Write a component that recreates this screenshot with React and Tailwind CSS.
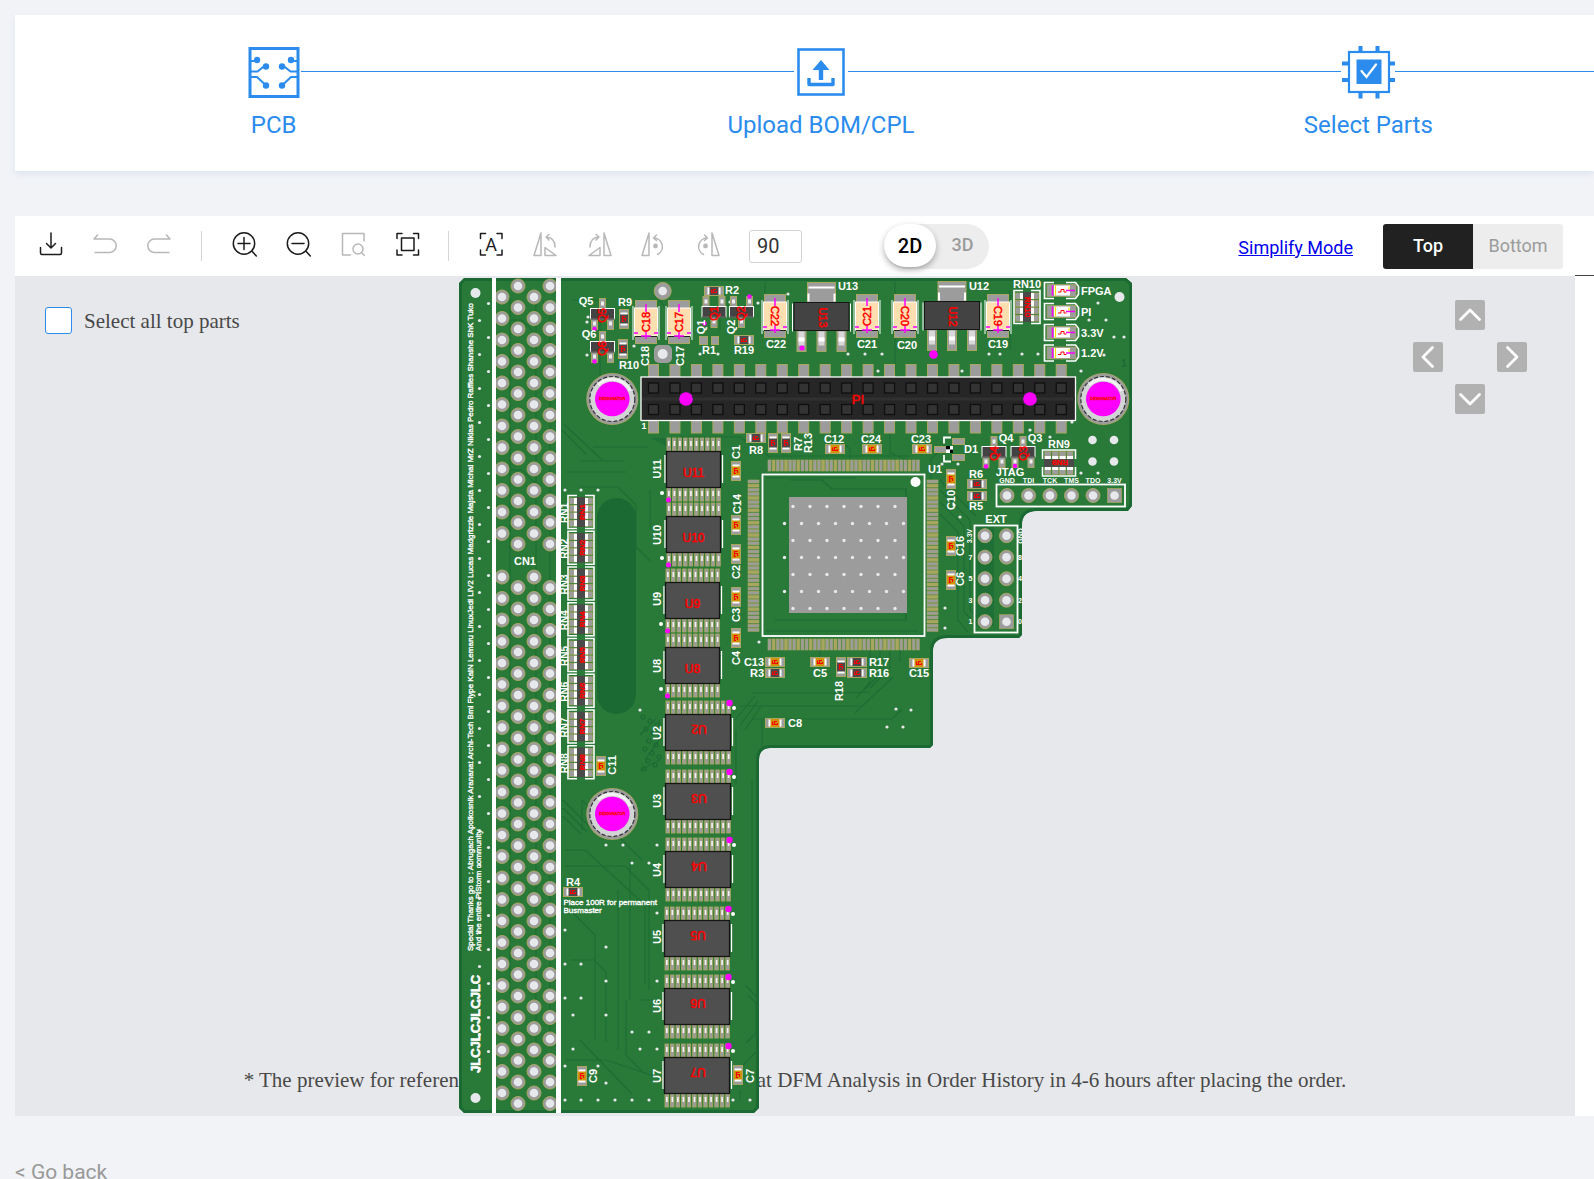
import React from "react";

const BLUE = "#2b8cee";
const GREEN = "#297a39";
const DARK = "#1b6a33";
const PAD = "#9c9c9c";
const GOLD = "#a9a660";
const HOLE = "#e7e8ec";
const PINK = "#ff00ff";

const range = (n) => Array.from({ length: n }, (_, i) => i);

/* ---------- step icons ---------- */

function PcbStepIcon() {
  const half = (
    <g>
      <path d="M2 16H9M2 26.500h8.500L18 20.500M2 32h8l8 7.500" fill="none" stroke={BLUE} strokeWidth="2" />
      <circle cx="10" cy="15" r="3.200" fill={BLUE} />
      <circle cx="19" cy="21.500" r="3.200" fill={BLUE} />
      <circle cx="19" cy="40.500" r="3.200" fill={BLUE} />
    </g>
  );
  return (
    <svg viewBox="0 0 54 54" className="size-[54px]" aria-hidden="true">
      <rect x="3" y="3.500" width="48" height="48" fill="none" stroke={BLUE} strokeWidth="3" />
      {half}
      <g transform="translate(54 0) scale(-1 1)">{half}</g>
    </svg>
  );
}

function UploadStepIcon() {
  return (
    <svg viewBox="0 0 54 54" className="size-[54px]" aria-hidden="true">
      <rect x="4.500" y="4.500" width="45" height="45" fill="none" stroke={BLUE} strokeWidth="2.600" />
      <path d="M27 15l8.500 10H29.200v10H24.800V25H18.500z" fill={BLUE} />
      <path d="M15 33v6.500h24V33" fill="none" stroke={BLUE} strokeWidth="3.400" strokeLinejoin="round" />
    </svg>
  );
}

function PartsStepIcon() {
  return (
    <svg viewBox="0 0 54 54" className="size-[54px]" aria-hidden="true">
      <path
        d="M19.500 1v6M36.500 1v6M19.500 47v6.500M36.500 47v6.500M1 18.500h7M1 35h7M48 18.500h7M48 35h7"
        stroke={BLUE}
        strokeWidth="4"
      />
      <rect x="8" y="7" width="40" height="40" fill="#fff" stroke={BLUE} strokeWidth="2.200" />
      <rect x="15.500" y="14.500" width="25" height="24.500" fill={BLUE} />
      <path d="M20.500 26l5 6 9.500-12.500" fill="none" stroke="#fff" strokeWidth="2.200" strokeLinecap="round" />
    </svg>
  );
}

function Step({ icon, label, first }) {
  return (
    <li className="flex flex-col items-center">
      <div className="flex w-full items-center">
        <span className={first ? "mb-0.5 h-px flex-1" : "mb-0.5 h-px flex-1 bg-[#2b8cee]"} />
        {icon}
        <span className="mb-0.5 h-px flex-1 bg-[#2b8cee]" />
      </div>
      <span className="mt-[10px] text-2xl leading-8 text-[#2b8cee]">{label}</span>
    </li>
  );
}

/* ---------- toolbar ---------- */

function ToolButton({ label, off, children }) {
  return (
    <button type="button" aria-label={label} className={off ? "pb-1 text-[#b8b8b8]" : "pb-1 text-[#1c1c1c]"}>
      <svg
        viewBox="0 0 24 24"
        className="size-6 overflow-visible"
        fill="none"
        stroke="currentColor"
        strokeWidth="1.500"
        strokeLinecap="round"
        strokeLinejoin="round"
      >
        {children}
      </svg>
    </button>
  );
}

const Separator = () => <span className="h-[30px] w-px bg-[#d6d6d6]" />;

const CORNERS = "M1.500 6.500v-5h5M18 1.500h5v5M23 18v5h-5M6.500 23h-5v-5";

const FlipLeft = () => (
  <>
    <path d="M1 23.500L8 1v22.500zM12 15.500l11 8H12z" />
    <path d="M13.500 5c5.500.5 8.500 4.500 8.500 10M16 2.500L13 5l3 3" />
  </>
);
const TurnLeft = () => (
  <>
    <path d="M1 23.500L8 1v22.500z" />
    <path d="M13 6a8.700 8.700 0 0 1 3.500 16.500M15.500 3L12.500 6l3 2.500" />
    <circle cx="14.500" cy="14" r="1.700" fill="currentColor" />
  </>
);

function Toolbar() {
  return (
    <div className="flex h-[60px] items-center bg-white pr-3 pl-6">
      <div className="flex items-center gap-[30px]">
        <ToolButton label="Download">
          <path d="M12 1v15M7.500 11.500L12 16l4.500-4.500M1.500 15.500V21q0 1.500 1.500 1.500h18q1.500 0 1.500-1.500v-5.500" />
        </ToolButton>
        <ToolButton label="Undo" off>
          <path d="M4.500 3L1 7h15.500a6.700 6.700 0 0 1 0 13.500H2" />
        </ToolButton>
        <ToolButton label="Redo" off>
          <path d="M19.500 3l3.500 4H7.500a6.700 6.700 0 0 0 0 13.500H22" />
        </ToolButton>
        <Separator />
        <ToolButton label="Zoom in">
          <circle cx="12" cy="11.500" r="10.700" />
          <path d="M19.800 19l4.500 5M12 5.500v12M6 11.500h12" />
        </ToolButton>
        <ToolButton label="Zoom out">
          <circle cx="12" cy="11.500" r="10.700" />
          <path d="M19.800 19l4.500 5M6 11.500h12" />
        </ToolButton>
        <ToolButton label="Zoom to area" off>
          <path d="M24 9V1.500H2.500V23h8" />
          <circle cx="18" cy="17" r="5" />
          <path d="M21.500 20.500l2.800 3" />
        </ToolButton>
        <ToolButton label="Fit to window">
          <g transform="translate(1.500 0)">
            <path d={CORNERS} />
            <rect x="6" y="6" width="12.500" height="12.500" />
          </g>
        </ToolButton>
        <Separator />
        <ToolButton label="Show designators">
          <path d={CORNERS} />
          <text x="12" y="19" textAnchor="middle" fontSize="18" fill="currentColor" stroke="none" fontFamily="Roboto">
            A
          </text>
        </ToolButton>
        <ToolButton label="Rotate left" off>
          <FlipLeft />
        </ToolButton>
        <ToolButton label="Rotate right" off>
          <g transform="translate(25 0) scale(-1 1)">
            <FlipLeft />
          </g>
        </ToolButton>
        <ToolButton label="Turn left about centre" off>
          <TurnLeft />
        </ToolButton>
        <ToolButton label="Turn right about centre" off>
          <g transform="translate(25 0) scale(-1 1)">
            <TurnLeft />
          </g>
        </ToolButton>
        <input
          type="text"
          aria-label="Rotation angle"
          defaultValue="90"
          className="h-[33px] w-[53px] rounded-[3px] border border-[#d2d2d2] bg-white px-[7px] text-xl text-[#333] outline-none"
        />
      </div>

      <div className="ml-[82px] flex h-[45px] rounded-full bg-[#ededed]">
        <button
          type="button"
          aria-pressed="true"
          className="h-[43px] w-[52px] rounded-full bg-white pt-0.5 text-xl font-medium text-black shadow-[0_3px_6px_rgba(0,0,0,0.3)]"
        >
          2D
        </button>
        <button type="button" aria-pressed="false" className="w-[53px] pb-0.5 text-lg font-medium text-[#9b9b9b]">
          3D
        </button>
      </div>

      <a href="#simplify" className="mt-[3px] ml-auto text-lg text-[#0000ee] underline">
        Simplify Mode
      </a>
      <div className="ml-[30px] flex h-[45px] overflow-hidden rounded-[3px] text-lg">
        <button type="button" aria-pressed="true" className="w-[90px] bg-[#212121] font-medium text-white">
          Top
        </button>
        <button type="button" aria-pressed="false" className="w-[90px] bg-[#ededed] text-[#9b9b9b]">
          Bottom
        </button>
      </div>
    </div>
  );
}

/* ---------- circuit board ---------- */

const BOARD =
  "M464 278H1126L1132 283V506L1128 511H1037Q1022 511 1022 525V635L1019 638H948Q933 638 933 651V745L930 748H771Q759 748 759 760V1108L754 1113H464L459 1108V283Z";

/* silkscreen text, centred; rot turns it about its own centre */
function Label({ x, y, t, s = 11, c = "#fff", rot = 0, w = 700, line = 0 }) {
  return (
    <text
      x={x}
      y={y + s * 0.36}
      textAnchor="middle"
      fontSize={s}
      fontWeight={w}
      fill={c}
      stroke={c}
      strokeWidth={line}
      transform={rot ? `rotate(${rot} ${x} ${y})` : undefined}
    >
      {t}
    </text>
  );
}

const Red = (p) => <Label c="#ff0000" w={400} s={12} line={0.5} {...p} />;

function Passive({ x, y, t, v }) {
  const cap = t[0] === "C";
  return (
    <g transform={`translate(${x} ${y}) rotate(${v ? 90 : 0})`}>
      <rect x="-9.500" y="-4.500" width="19" height="9" fill={PAD} stroke={GOLD} />
      <rect x="-6.500" y="-3.500" width="13" height="7" fill="#fff" />
      <rect x="-4.500" y="-4" width="9" height="8" fill={cap ? "#cf930a" : "#4a4a4a"} />
      <path d="M-2.500 -1.500v3h2v-3h2.500M0 1.500h2.500v-1.500" fill="none" stroke="#ff0000" strokeWidth="1.200" />
    </g>
  );
}

/* [ref, x, y, vertical, label x, label y, label rotation] */
const PASSIVES = [
  ["C1", 736, 471, 1, 736, 452, -90],
  ["C14", 736, 525, 1, 737, 504, -90],
  ["C2", 736, 554, 1, 736, 572, -90],
  ["C3", 736, 597, 1, 736, 615, -90],
  ["C4", 736, 638, 1, 736, 658, -90],
  ["C13", 775, 662, 0, 754, 662, 0],
  ["R3", 775, 673, 0, 757, 673, 0],
  ["C5", 820, 662, 0, 820, 673, 0],
  ["R18", 841, 667, 1, 839, 691, -90],
  ["R17", 857, 662, 0, 879, 662, 0],
  ["R16", 857, 673, 0, 879, 673, 0],
  ["C15", 919, 663, 0, 919, 673, 0],
  ["C8", 775, 723, 0, 795, 723, 0],
  ["C10", 951, 479, 1, 951, 500, -90],
  ["C16", 951, 546, 1, 960, 546, -90],
  ["C6", 951, 580, 1, 960, 579, -90],
  ["R6", 977, 484, 0, 976, 474, 0],
  ["R5", 977, 496, 0, 976, 506, 0],
  ["C23", 922, 449, 0, 921, 439, 0],
  ["C12", 835, 449, 0, 834, 439, 0],
  ["C24", 872, 449, 0, 871, 439, 0],
  ["R8", 756, 438, 0, 756, 450, 0],
  ["R7", 773, 443, 1, 798, 444, -90],
  ["R13", 786, 443, 1, 808, 443, -90],
  ["R2", 714, 291, 0, 732, 290, 0],
  ["R19", 744, 340, 0, 744, 350, 0],
  ["R9", 624, 319, 1, 625, 302, 0],
  ["R10", 623, 349, 1, 629, 365, 0],
  ["C9", 582, 1076, 1, 593, 1076, -90],
  ["C7", 738, 1075, 1, 750, 1076, -90],
  ["C11", 601, 766, 1, 612, 765, -90],
  ["R4", 573, 892, 0, 573, 882, 0],
];

function Tantalum({ x, y, t, rot }) {
  return (
    <g>
      <path d={`M${x - 13} ${y - 16}v34M${x + 13} ${y - 16}v34`} stroke="#fff" />
      <rect x={x - 10.500} y={y - 21.500} width="21" height="43" fill={PAD} stroke={GOLD} />
      <rect x={x - 11.500} y={y - 14} width="23" height="28" fill="#ffdfb0" stroke="#fff" />
      <path d={`M${x - 11} ${y + 14.500}h22`} stroke="#222" />
      <path
        d={`M${x} ${y - 18}v8M${x} ${y + 9}v8M${x - 5} ${y + 14}h10M${x - 12} ${y + 11}h4M${x + 8} ${y + 11}h4`}
        stroke={PINK}
        strokeWidth="1.500"
      />
      <Red x={x} y={y} t={t} rot={rot} s={11} />
    </g>
  );
}

const TANTALUMS = [
  ["C18", 646, 322, -90],
  ["C17", 679, 322, -90],
  ["C22", 775, 316, 90],
  ["C21", 867, 316, -90],
  ["C20", 905, 316, 90],
  ["C19", 998, 316, 90],
];

function Regulator({ x, t, y }) {
  return (
    <g>
      <rect x={x - 14} y={y - 20} width="28" height="22" fill={PAD} stroke={GOLD} />
      <path d={`M${x - 13} ${y - 15}h26M${x - 13} ${y - 9}v8M${x + 13} ${y - 9}v8`} stroke="#fff" strokeWidth="2" />
      {[-20, 0, 20].map((d) => (
        <g key={d}>
          <rect x={x + d - 4.500} y={y + 28} width="9" height="21" fill={PAD} stroke={GOLD} />
          <rect x={x + d - 3} y={y + 29} width="6" height="14" fill="#d8d8d8" />
          <rect x={x + d - 3} y={y + 35} width="6" height="4" fill="#fff" />
        </g>
      ))}
      <path d={`M${x - 29} ${y + 1}v28M${x + 29} ${y + 1}v28`} stroke="#fff" />
      <rect x={x - 27.500} y={y} width="55" height="28" fill="#434343" stroke="#161616" />
      <Red x={x + 1} y={y + 15} t={t} rot={90} s={11} />
    </g>
  );
}

/* flip: two pads on top instead of below */
function Transistor({ x, y, t, flip }) {
  const pad = (px, py) => (
    <g key={`${px},${py}`}>
      <rect x={px - 3} y={py} width="6" height="11" fill={PAD} stroke={GOLD} />
      <rect x={px - 1.500} y={py + 3} width="3" height="4" fill="#eee" />
    </g>
  );
  return (
    <g>
      {pad(x, flip ? y + 10 : y - 10)}
      {pad(x - 8, flip ? y - 10 : y + 10)}
      {pad(x + 8, flip ? y - 10 : y + 10)}
      <rect x={x - 12} y={y} width="24" height="10.500" fill="#434343" stroke="#fff" />
      <path d={`M${x - 12} ${y + 10.500}h24`} stroke="#111" />
      <Red x={x} y={y + 7} t={t} rot={-90} s={11} />
    </g>
  );
}

function Resistors({ x, y, t, rot, tr }) {
  return (
    <g>
      <g transform={`translate(${x} ${y}) rotate(${rot})`}>
        <path d="M-4 -16.500h-9v33h9M4 -16.500h9v33h-9" fill="none" stroke="#fff" strokeWidth="1.600" />
        {range(4).map((i) => (
          <g key={i}>
            <rect x="-11.500" y={-14 + i * 7.400} width="23" height="6" fill={PAD} stroke={GOLD} strokeWidth=".7" />
            <rect x="-7" y={-14 + i * 7.400} width="14" height="6" fill="#fff" />
          </g>
        ))}
        <rect x="-4" y="-15" width="8" height="30" fill="#4a4a4a" />
      </g>
      <Red x={x + 1} y={y} t={t} rot={tr} s={8} />
    </g>
  );
}

function Led({ y, t }) {
  return (
    <g>
      <path d={`M1054 ${y - 8}h-9.500v16h9.500M1066 ${y - 8}h9.500l3 4v8l-3 4h-9.500`} fill="none" stroke="#fff" strokeWidth="1.700" />
      <rect x="1047" y={y - 6} width="29" height="12" fill={PAD} stroke={GOLD} strokeWidth=".7" />
      <rect x="1054" y={y - 5} width="16" height="10" fill="#fff" />
      <path d={`M1055.500 ${y - 5}v10M1069 ${y - 4}v4`} stroke="#f5e800" strokeWidth="1.200" />
      <path d={`M1052.500 ${y - 5}v10M1066 ${y}h9`} stroke={PINK} strokeWidth="1.500" />
      <path d={`M1058 ${y + 1.500}h3v-2.500h3v2.500h2.500`} fill="none" stroke="#f00" />
      <text x="1081" y={y + 4} fontSize="11" fontWeight="700" fill="#fff">
        {t}
      </text>
    </g>
  );
}

function Soic({ x, y, w, h, n, t, rot, ly }) {
  const cx = x + w / 2;
  return (
    <g>
      {range(n).map((i) =>
        [y - 13, y + h].map((py) => (
          <g key={`${i},${py}`}>
            <rect x={x + 1 + i * 5.530} y={py} width="3.500" height="13" fill={PAD} stroke={GOLD} strokeWidth=".9" />
            <rect x={x + 2 + i * 5.530} y={py + 3} width="1.700" height="5" fill="#f2f2f2" />
          </g>
        ))
      )}
      <path d={`M${x - 1} ${y + 4}v28M${x + w + 1.500} ${y + 4}v28`} stroke="#fff" strokeWidth="1.300" />
      <rect x={x + 0.5} y={y + 0.5} width={w - 1} height={h - 1} fill="#4f4f4f" stroke="#151515" strokeWidth="1.300" />
      <Red x={rot ? cx + 1 : cx} y={rot ? y + 15 : y + 22} t={t} rot={rot} />
      {rot ? (
        <>
          <circle cx={x + w - 1.500} cy={y - 11} r="3.200" fill={PINK} />
          <circle cx={x + w + 3} cy={y - 6} r="2" fill="#fff" />
        </>
      ) : (
        <>
          <circle cx={x + 2.500} cy={y + h + 12} r="2.500" fill={PINK} />
          <circle cx={x - 4} cy={y + h + 5} r="2" fill="#fff" />
        </>
      )}
      <Label x={657} y={ly} t={t} rot={-90} />
    </g>
  );
}

const CHIPS = [
  ["U11", 666, 451, 55, 10, 0, 469],
  ["U10", 666, 516, 55, 10, 0, 535],
  ["U9", 665, 582, 55, 10, 0, 599],
  ["U8", 665, 647, 55, 10, 0, 666],
  ["U2", 665, 714, 66, 12, 180, 733],
  ["U3", 665, 783, 66, 12, 180, 801],
  ["U4", 665, 851, 66, 12, 180, 870],
  ["U5", 664, 920, 66, 12, 180, 937],
  ["U6", 664, 988, 66, 12, 180, 1006],
  ["U7", 664, 1057, 66, 12, 180, 1076],
];

function Via({ x, y, r = 7, square }) {
  return (
    <g>
      {square ? (
        <rect x={x - 7} y={y - 7} width="14" height="14" fill={PAD} stroke={GOLD} strokeWidth=".7" />
      ) : (
        <circle cx={x} cy={y} r={r} fill={PAD} stroke={GOLD} />
      )}
      <circle cx={x} cy={y} r="4.300" fill={HOLE} />
    </g>
  );
}

function MountHole({ x, y }) {
  return (
    <g>
      <circle cx={x} cy={y} r="26" fill={GOLD} />
      <circle cx={x} cy={y} r="25.200" fill={PAD} />
      <circle cx={x} cy={y} r="22.500" fill="#d3d4d6" stroke="#333" strokeWidth="1.200" strokeDasharray="4 2" />
      <path d={`M${x - 14} ${y - 14}A20 20 0 0 1 ${x + 18} ${y - 8}`} fill="none" stroke="#f2f2f2" strokeWidth="3" />
      <circle cx={x} cy={y} r="17.300" fill={PINK} />
      <Red x={x} y={y} t="DESIGNATOR" s={4} line={0.3} />
    </g>
  );
}

function EdgeConnector() {
  const columns = [
    [502, 297, 577, 12, 25],
    [518, 286, 587.500, 13, 25],
    [534, 297, 577, 12, 25],
    [550, 286, 587.500, 13, 25],
  ];
  return (
    <g>
      {columns.map(([x, top, low, a, b]) => (
        <g key={x}>
          {range(a).map((i) => (
            <Via key={i} x={x} y={top + i * 21.500} />
          ))}
          {range(b).map((i) => (
            <Via key={`b${i}`} x={x} y={low + i * 21.500} />
          ))}
        </g>
      ))}
      <Label x={525} y={561} t="CN1" />
    </g>
  );
}

function PinHeader() {
  return (
    <g>
      {range(20).map((i) => (
        <g key={i} fill={PAD} stroke={GOLD}>
          <rect x={648.500 + i * 21.460} y="364.500" width="10" height="13" />
          <rect x={648.500 + i * 21.460} y="420" width="10" height="13" />
        </g>
      ))}
      <rect x="641" y="377" width="434.500" height="43.500" fill="#262626" stroke="#fff" strokeWidth="1.300" />
      <path d="M642 399H1075" stroke="#303030" strokeWidth="3" />
      {range(20).map((i) =>
        [388, 409.500].map((y) => (
          <rect
            key={`${i},${y}`}
            x={648.500 + i * 21.460}
            y={y - 5}
            width="10"
            height="10"
            fill="#333"
            stroke="#0f0f0f"
            strokeWidth="1.300"
          />
        ))
      )}
      <circle cx="686" cy="399" r="6.800" fill={PINK} />
      <circle cx="1030" cy="399" r="6.800" fill={PINK} />
      <Red x={858} y={399} t="PI" s={13} />
      <Label x={644} y={426} t="1" s={9} />
      <Label x={1124} y={363} t="1" s={10} c={DARK} />
    </g>
  );
}

function MainChip() {
  return (
    <g>
      {range(37).map((i) => {
        const c = i % 3 === 1 ? GOLD : PAD;
        const d = i * 4.120;
        return (
          <g key={i} fill={c} stroke={GOLD} strokeWidth=".6">
            <rect x={768 + d} y="460" width="3" height="11" />
            <rect x={768 + d} y="639" width="3" height="11" />
            <rect x="748" y={480 + d} width="11" height="3" />
            <rect x="927" y={480 + d} width="11" height="3" />
          </g>
        );
      })}
      <rect x="762.500" y="474.500" width="162" height="161.500" fill={GREEN} stroke="#fff" strokeWidth="1.800" />
      <path d="M766 478h90M766 631h152M775 620h131V489H832l-10-9H790" fill="none" stroke={DARK} strokeWidth="1.200" />
      <rect x="789" y="497" width="118" height="116" fill={PAD} />
      {range(7).map((r) =>
        range(r % 2 ? 8 : 7).map((k) => (
          <circle key={`${r},${k}`} cx={(r % 2 ? 784.500 : 793) + k * 17} cy={506.500 + r * 17} r="1.700" fill={HOLE} />
        ))
      )}
      <circle cx="915.500" cy="482" r="5" fill="#fff" />
      <Label x={935} y={469} t="U1" />
    </g>
  );
}

function Connectors() {
  return (
    <g>
      <Label x={1010} y={472} t="JTAG" />
      {["GND", "TDI", "TCK", "TMS", "TDO", "3.3V"].map((t, i) => (
        <g key={t}>
          <Label x={1007 + i * 21.500} y={480} t={t} s={7} />
          <Via x={1007 + i * 21.500} y={495.500} square={i === 5} />
        </g>
      ))}
      <rect x="996.500" y="484.500" width="128.500" height="22" fill="none" stroke="#fff" strokeWidth="1.800" />
      <Label x={996} y={519} t="EXT" />
      {range(5).map((i) => (
        <g key={i}>
          <Via x={985} y={535.700 + i * 21.500} />
          <Via x={1006.500} y={535.700 + i * 21.500} square={i === 4} />
          {i > 0 && <Label x={970.500} y={535.700 + i * 21.500} t={["", "7", "5", "3", "1"][i]} s={7} />}
          {i > 0 && <Label x={1020} y={535.700 + i * 21.500} t={["", "8", "4", "2", "0"][i]} s={7} />}
        </g>
      ))}
      <Label x={969} y={536} t="3.3V" s={7} rot={-90} />
      <Label x={1020} y={536} t="GND" s={7} rot={-90} />
      <rect x="974.500" y="525.500" width="43" height="107" fill="none" stroke="#fff" strokeWidth="1.800" />
    </g>
  );
}

const TRACES = [
  "M562 430l24 24M564 424l38 36M580 461h45M593 447h55M566 472h60M580 487h38l18 18v42l14 14M650 490v40",
  "M572 300h28v110M720 300v30M765 282v24h-20M895 282v90M1010 290v60M660 300l20 30M600 380h30",
  "M770 456h140M700 445l-20-8h60l30 20M830 433l20 16v10M890 433v20l20 8M945 445l-14 14v20",
  "M940 490l30 30v90l16 16M940 502l24 24v86l16 16M940 514l18 18v88l10 12M940 480l36 36",
  "M740 706h120M752 693h90l28-1M752 719h140l10-10M855 713l38-36M735 720l20-24M740 725l18-24M745 730l16-24M762 720v26",
  "M820 650v20M870 650v32l-14 16M880 650v24l-16 16M890 650v18l-20 20M900 650v12",
  "M565 850h20l60 55v80M565 866h60l24 24v100M565 905l30 30v104M570 960h24l12 12v70M618 890v160",
  "M582 830v-30l60 60M630 860v140M640 1000h20M626 1000v55l16 16M580 1040l52 54M566 1060h40l60 20",
  "M745 985l14 14v50l-16 16M748 995l8 8v30l-10 10M736 730v55M752 780v180M740 1090v10",
  "M640 735l16-16M645 760l14-20v-20M640 770l20-10M563 800l30 30M563 808l24 24M563 816l18 18M563 560h20",
];

const VIAS = [
  [565, 490], [581, 490], [598, 490], [640, 710], [606, 845], [623, 845], [657, 845], [632, 863], [649, 863],
  [657, 913], [565, 930], [606, 947], [565, 964], [581, 964], [606, 981], [657, 981], [565, 998], [581, 998],
  [573, 1015], [606, 1015], [632, 1032], [649, 1032], [573, 1049], [640, 1049], [657, 1049], [565, 1066],
  [598, 1066], [606, 1083], [565, 1100], [581, 1100], [598, 1100], [615, 1100], [632, 1100], [649, 1100],
  [733, 1100], [750, 1100], [1098, 303], [1089, 320], [1106, 320], [1114, 337], [1124, 337], [1104, 355],
  [1081, 371], [1000, 354], [1022, 354], [1038, 354], [989, 354], [848, 354], [865, 354], [882, 354],
  [700, 354], [718, 354], [878, 371], [962, 371], [1072, 422], [945, 628], [911, 710], [887, 727], [903, 727],
  [896, 709], [759, 642], [954, 505], [960, 517], [945, 608], [788, 294], [730, 302], [587, 322], [587, 355],
  [634, 346], [588, 317], [758, 303], [1050, 437], [1030, 430], [958, 464], [942, 464], [1081, 473], [1098, 473],
];

function Board() {
  return (
    <svg
      viewBox="458 278 674 835"
      className="relative mt-0.5 h-[835px] w-[674px] flex-none"
      fontFamily="'Liberation Sans', Arial, sans-serif"
      role="img"
      aria-label="Circuit board, top side"
    >
      <defs>
        <clipPath id="board-edge">
          <path d={BOARD} />
        </clipPath>
      </defs>
      <g clipPath="url(#board-edge)">
        <path d={BOARD} fill={GREEN} stroke={DARK} strokeWidth="6" />
        {TRACES.map((d) => (
          <path key={d} d={d} fill="none" stroke="#1d6c34" strokeWidth="1.100" />
        ))}
        <path
          d="M500 292l10 6v700M526 292l10 8v760M542 300l8 8v740M498 320h24l20 20M498 470h24l20 20M500 820h20l20 20"
          fill="none"
          stroke={DARK}
        />
        <path d="M650 438h60v14l-40-4zM976 526h18v100h-18zM790 480h118v12H790z" fill="#1f7036" />
        <rect x="597" y="498" width="39" height="216" rx="19.500" fill={DARK} />
        {VIAS.map(([x, y]) => (
          <circle key={`${x},${y}`} cx={x} cy={y} r="1.600" fill={HOLE} />
        ))}

        {/* breakaway strip */}
        <circle cx="475.500" cy="293" r="5" fill={HOLE} />
        <circle cx="475.500" cy="1098" r="5" fill={HOLE} />
        {range(46).map((i) => (
          <circle key={i} cx={i % 2 ? 479.500 : 488.500} cy={303.500 + i * 17} r="1.600" fill={HOLE} />
        ))}
        <g fill="#fff" stroke="#fff" strokeWidth=".35" fontSize="8">
          <text transform="translate(473 951) rotate(-90)">
            Special Thanks go to : Abrugach Apolkosnik Arananat Archi-Tech Bmi Flype KaiN Lemaru LinuxJedi LIV2 Lucas
            Madgrizzle Majsta Michal MrZ Niklas Pedro Raffles Shanshe ShK Tuko
          </text>
          <text transform="translate(481 951) rotate(-90)">And the entire PiStorm community</text>
          <text x="563.500" y="905">
            Place 100R for permanent
          </text>
          <text x="563.500" y="913">
            Busmaster
          </text>
          <text transform="translate(480 1073) rotate(-90)" fontSize="13" fontWeight="700" strokeWidth=".6">
            JLCJLCJLCJLC
          </text>
        </g>
        <EdgeConnector />

        {range(8).map((i) => (
          <Label key={i} x={564} y={513 + i * 35.750} t={`RN${i + 1}`} rot={-90} s={10} />
        ))}
        <rect x="492" y="278" width="4" height="835" fill="#fff" />
        <rect x="556" y="278" width="5" height="835" fill="#fff" />
        {range(8).map((i) => (
          <Resistors key={i} x={581} y={512 + i * 35.750} t={`RN${i + 1}`} rot={0} tr={-90} />
        ))}
        <Resistors x={1027} y={307} t="RN10" rot={0} tr={90} />
        <Resistors x={1059} y={463} t="RN9" rot={90} tr={180} />
        <Label x={1027} y={284} t="RN10" />
        <Label x={1059} y={444} t="RN9" />

        <Via x={662.700} y={291} r={8.500} />
        <rect x="654" y="345" width="18" height="18" rx="5" fill={PAD} />
        <circle cx="662.700" cy="354" r="5" fill={HOLE} />
        <PinHeader />
        <MountHole x={612.300} y={399} />
        <MountHole x={1103.300} y={399} />
        <MountHole x={612.300} y={814} />

        {TANTALUMS.map(([t, x, y, rot]) => (
          <Tantalum key={t} x={x} y={y} t={t} rot={rot} />
        ))}
        <Label x={645} y={356} t="C18" rot={-90} />
        <Label x={680} y={356} t="C17" rot={-90} />
        <Label x={776} y={344} t="C22" />
        <Label x={867} y={344} t="C21" />
        <Label x={907} y={345} t="C20" />
        <Label x={998} y={344} t="C19" />

        <Regulator x={821.500} y={302.500} t="U13" />
        <Regulator x={952} y={301.500} t="U12" />
        <circle cx="802" cy="348" r="2.500" fill={PINK} />
        <circle cx="933.500" cy="354.500" r="4.300" fill={PINK} />
        <Label x={848} y={286} t="U13" />
        <Label x={979} y={286} t="U12" />

        <Transistor x={602.500} y={308.500} t="Q5" />
        <Transistor x={602.500} y={341.500} t="Q6" />
        <Transistor x={714} y={306.500} t="Q1" flip />
        <Transistor x={741.500} y={306.500} t="Q2" flip />
        <Transistor x={994} y={446.500} t="Q4" />
        <Transistor x={1023} y={446.500} t="Q3" />
        {[[594.500, 329], [594.500, 361.500], [704.500, 323.500], [749.500, 296.500], [986, 466.500], [1015, 466]].map(
          ([x, y]) => (
            <circle key={`${x},${y}`} cx={x} cy={y} r="2.200" fill={PINK} />
          )
        )}
        <Label x={586} y={301} t="Q5" />
        <Label x={589} y={334} t="Q6" />
        <Label x={701} y={327} t="Q1" rot={-90} />
        <Label x={731} y={327} t="Q2" rot={-90} />
        <Label x={1006} y={438} t="Q4" />
        <Label x={1035} y={438} t="Q3" />

        <g fill={PAD} stroke={GOLD}>
          <rect x="699.500" y="336.500" width="8" height="8" />
          <rect x="711.500" y="336.500" width="7" height="8" />
          <rect x="934.500" y="446.500" width="15" height="6" />
          <rect x="952.500" y="438.500" width="12" height="6" />
          <rect x="952.500" y="454.500" width="12" height="6" />
        </g>
        <path d="M951 437.500h-7v6M944 455v6.500h7" fill="none" stroke="#fff" strokeWidth="1.800" />
        <path d="M946 446h4v3.500h-4zM950 449.500h3v3.500h-3z" fill="#000" />
        <path d="M950 446h3v3.500h-3zM946 449.500h4v3.500h-4z" fill="#fff" />
        <Label x={709} y={350} t="R1" />
        <Label x={971} y={449} t="D1" />

        {PASSIVES.map(([t, x, y, v, lx, ly, rot]) => (
          <g key={t}>
            <Passive x={x} y={y} t={t} v={v} />
            <Label x={lx} y={ly} t={t} rot={rot} />
          </g>
        ))}
        {[[290.500, "FPGA"], [311.500, "PI"], [332.500, "3.3V"], [353, "1.2V"]].map(([y, t]) => (
          <Led key={t} y={y} t={t} />
        ))}
        <circle cx="1119.500" cy="297" r="5" fill={HOLE} />
        {[1092.500, 1114].map((x) =>
          [440, 461.500].map((y) => <circle key={`${x},${y}`} cx={x} cy={y} r="4.300" fill={HOLE} />)
        )}

        {range(14).map((i) => (
          <circle
            key={i}
            cx={643 + ((i * 7) % 18)}
            cy={717 + i * 4}
            r="2"
            fill="none"
            stroke={DARK}
            strokeWidth="1.200"
          />
        ))}
        {CHIPS.map(([t, x, y, w, n, rot, ly]) => (
          <Soic key={t} x={x} y={y} w={w} h={37} n={n} t={t} rot={rot} ly={ly} />
        ))}
        <MainChip />
        <Connectors />
      </g>
    </svg>
  );
}

/* ---------- viewer ---------- */

function PanButton({ label, d, place }) {
  return (
    <button
      type="button"
      aria-label={label}
      className={`flex size-[30px] items-center justify-center rounded-[2px] bg-[#b1b1b1] ${place}`}
    >
      <svg viewBox="0 0 30 30" className="size-[30px]" fill="none" stroke="#fff" strokeWidth="2.800" strokeLinecap="round" strokeLinejoin="round">
        <path d={d} />
      </svg>
    </button>
  );
}

function Viewer() {
  return (
    <div className="relative flex h-[840px] justify-center overflow-hidden bg-[#e7e8ec] font-['Liberation_Serif',serif] text-[21px] text-[#484848]">
      <p className="absolute inset-x-0 bottom-[22px] text-center leading-7 whitespace-nowrap">
        * The preview for reference only. Check the parts placement at DFM Analysis in Order History in 4-6 hours after
        placing the order.
      </p>
      <Board />
      <label className="absolute top-[30px] left-[30px] flex items-center gap-3 leading-[27px]">
        <input
          type="checkbox"
          className="size-[27px] appearance-none rounded-[3px] border border-[#2b8cee] bg-white checked:bg-[#2b8cee]"
        />
        <span className="pt-0.5">Select all top parts</span>
      </label>
      <div className="absolute top-6 right-12 grid grid-cols-3 gap-3">
        <PanButton label="Pan up" place="col-start-2" d="M5.500 19.500L15 10l9.500 9.500" />
        <PanButton label="Pan left" place="col-start-1 row-start-2" d="M19.500 5.500L10 15l9.500 9.500" />
        <PanButton label="Pan right" place="col-start-3 row-start-2" d="M10.500 5.500L20 15l-9.500 9.500" />
        <PanButton label="Pan down" place="col-start-2 row-start-3" d="M5.500 10.500L15 20l9.500-9.500" />
      </div>
    </div>
  );
}

export default function App() {
  return (
    <main className="min-h-screen overflow-hidden bg-[#f1f3f7] pt-[15px] pl-[15px] font-[Roboto,sans-serif]">
      <nav aria-label="Order steps" className="bg-white pt-[30px] pb-[30px] shadow-[0_3px_6px_rgba(200,210,230,0.4)]">
        <ol className="-mr-12 -ml-[15px] grid grid-cols-3">
          <Step icon={<PcbStepIcon />} label="PCB" first />
          <Step icon={<UploadStepIcon />} label="Upload BOM/CPL" />
          <Step icon={<PartsStepIcon />} label="Select Parts" />
        </ol>
      </nav>

      <section className="mt-[45px] flex bg-white">
        <div className="min-w-0 flex-1">
          <Toolbar />
          <Viewer />
        </div>
        <div className="w-[19px]">
          <div className="h-[60px] border-b border-[#444]" />
        </div>
      </section>

      <a href="#back" className="mt-[46px] block text-[21px] leading-5 text-[#999]">
        &lt; Go back
      </a>
    </main>
  );
}
